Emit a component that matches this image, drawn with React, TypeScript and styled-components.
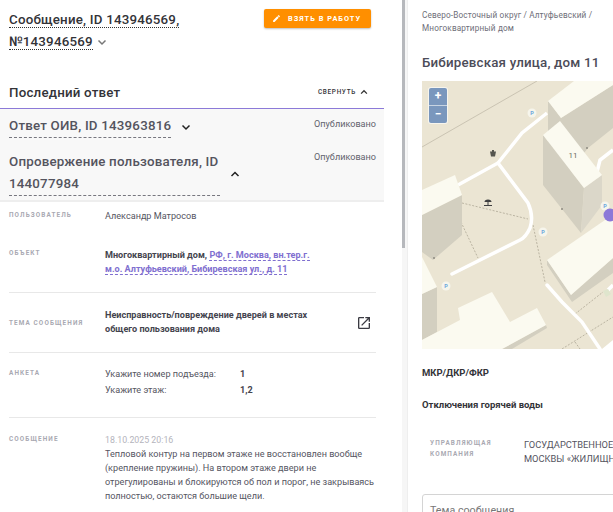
import styled, { createGlobalStyle } from "styled-components";

const GlobalStyle = createGlobalStyle`
  html, body {
    margin: 0;
    height: 100%;
    overflow: hidden;
    background: #fff;
  }
  body {
    font-family: Roboto, "Noto Sans", sans-serif;
    color: #3c3c46;
  }
`;

const Page = styled.div`
  display: flex;
  width: 613px;
  height: 512px;
  overflow: hidden;
`;

const LeftPane = styled.div`
  width: 402px;
  flex: none;
  height: 512px;
  overflow: hidden;
`;

const ScrollTrack = styled.div`
  width: 5px;
  flex: none;
  background: #f6f6f6;
`;

const ScrollThumb = styled.div`
  width: 3px;
  height: 248px;
  background: #b6b8bc;
`;

const Head = styled.div`
  display: flex;
  justify-content: space-between;
  align-items: flex-start;
  padding: 9px 13px 0 9px;
  width: 384px;
  height: 51px;
  box-sizing: border-box;
`;

const MainTitle = styled.div`
  width: 200px;
  font-size: 13.33px;
  line-height: 21.5px;
  letter-spacing: 0.2px;
  font-weight: 500;
  color: #333338;
`;

const DottedText = styled.span`
  border-bottom: 1px dotted #333;
`;

const TitleChevron = styled.span`
  display: inline-block;
  line-height: 0;
  vertical-align: -2px;
`;

const TakeButton = styled.button`
  display: flex;
  align-items: center;
  gap: 7px;
  height: 19px;
  width: 107px;
  padding: 0 0 0 8px;
  box-sizing: border-box;
  border: none;
  border-radius: 2px;
  background: #ff8f00;
  color: #fff;
  font-family: Roboto, sans-serif;
  font-size: 7.4px;
  font-weight: 700;
  letter-spacing: 1px;
  white-space: nowrap;
  box-shadow: 0 1px 2px rgba(0, 0, 0, 0.25);
`;

const SectionHead = styled.div`
  display: flex;
  justify-content: space-between;
  align-items: center;
  width: 384px;
  height: 24px;
  margin-top: 29px;
  padding: 0 15px 0 9px;
  box-sizing: border-box;
`;

const SectionTitle = styled.div`
  font-size: 13.33px;
  letter-spacing: 0.2px;
  font-weight: 500;
  color: #333338;
`;

const Collapse = styled.div`
  display: flex;
  align-items: center;
  gap: 3px;
  font-size: 6.4px;
  font-weight: 500;
  letter-spacing: 0.7px;
  color: #333338;
`;

const Answers = styled.div`
  width: 384px;
  margin-top: 4px;
  height: 94px;
  box-sizing: border-box;
  border-top: 1px solid #8c7ad8;
  border-bottom: 2px solid #eeeeee;
  background: #f8f8f8;
  padding: 6px 8px 0 9px;
`;

const AnswerRow = styled.div<{ $last?: boolean }>`
  display: flex;
  justify-content: space-between;
  align-items: flex-start;
  margin-bottom: ${(p) => (p.$last ? "0" : "13px")};
`;

const AnswerLeft = styled.div`
  display: flex;
  align-items: center;
  gap: 9px;
`;

const AnswerTitle = styled.div<{ $wide?: boolean }>`
  width: ${(p) => (p.$wide ? "211px" : "auto")};
  font-size: 13.33px;
  line-height: 22px;
  font-weight: 500;
  color: #54545e;
  letter-spacing: 0.2px;
  border-bottom: 1px dashed #77777f;
`;

const Status = styled.div<{ $raised?: boolean }>`
  margin-top: ${(p) => (p.$raised ? "-2px" : "1px")};
  font-size: 9.1px;
  line-height: 16px;
  color: #62626c;
`;

const Rows = styled.div`
  width: 367px;
  margin-left: 9px;
`;

const InfoRow = styled.div<{ $height: number; $line?: boolean; $center?: boolean }>`
  display: grid;
  grid-template-columns: 96px 1fr;
  height: ${(p) => p.$height}px;
  box-sizing: border-box;
  align-items: ${(p) => (p.$center ? "center" : "start")};
  border-bottom: ${(p) => (p.$line ? "1px solid #e8e8e8" : "none")};
`;

const RowLabel = styled.div<{ $top?: number }>`
  margin-top: ${(p) => p.$top ?? 0}px;
  font-size: 6.4px;
  font-weight: 700;
  letter-spacing: 1.1px;
  line-height: 10px;
  color: #a9a9b2;
`;

const CompanyLabel = styled(RowLabel)`
  line-height: 11px;
`;

const RowValue = styled.div<{ $top?: number }>`
  margin-top: ${(p) => p.$top ?? 0}px;
  font-size: 9.1px;
  line-height: 14px;
  color: #55555f;
`;

const BoldValue = styled(RowValue)`
  font-weight: 700;
  line-height: 13.5px;
  color: #44444e;
  width: 212px;
`;

const AddressLink = styled.span`
  color: #7f6fd0;
  border-bottom: 1px dashed #7f6fd0;
`;

const Subject = styled.div`
  display: flex;
  justify-content: space-between;
  align-items: center;
  padding-right: 4px;
`;

const Survey = styled.div`
  display: grid;
  grid-template-columns: 135px 1fr;
  row-gap: 2px;
  margin-top: 14px;
`;

const SurveyAnswer = styled.span`
  font-size: 9.1px;
  line-height: 14px;
  font-weight: 700;
  color: #44444e;
`;

const MessageBody = styled.div`
  margin-top: 16px;
`;

const Dated = styled.div`
  font-size: 8.8px;
  line-height: 13px;
  color: #b4b4bc;
`;

const RightPane = styled.div`
  flex: 1;
  min-width: 0;
  padding: 9px 0 0 14px;
  overflow: hidden;
  border-left: 1px solid #eee;
`;

const Crumbs = styled.div`
  font-size: 8.2px;
  line-height: 13px;
  letter-spacing: 0.15px;
  color: #6e6e78;
  width: 190px;
`;

const PlaceTitle = styled.div`
  margin-top: 18px;
  font-size: 13.33px;
  line-height: 20px;
  font-weight: 500;
  letter-spacing: 0.2px;
  color: #4c4c58;
  white-space: nowrap;
`;

const MapBox = styled.div`
  position: relative;
  margin-top: 8px;
  height: 268px;
  width: 191px;
  overflow: hidden;
  background: #ebe5d3;
`;

const MapCanvas = styled.svg`
  display: block;
`;

const ZoomBox = styled.div`
  position: absolute;
  top: 7px;
  left: 7px;
  width: 18px;
  border-radius: 2px;
  box-shadow: 0 0 0 1px rgba(255, 255, 255, 0.6);
  background: #7a97bd;
  color: #fff;
  font-size: 12px;
  font-weight: 700;
  text-align: center;
`;

const ZoomBtn = styled.div`
  height: 17px;
  line-height: 16px;
  & + & {
    border-top: 1px solid #c8d4e2;
  }
`;

const BlockTitle = styled.div<{ $top: number }>`
  margin-top: ${(p) => p.$top}px;
  font-size: 9.5px;
  line-height: 14px;
  font-weight: 700;
  color: #333338;
  white-space: nowrap;
`;

const CompanyRow = styled.div`
  display: grid;
  grid-template-columns: 94px 200px;
  margin-top: 26px;
  padding-left: 8px;
`;

const CompanyValue = styled.div`
  font-size: 9.3px;
  line-height: 14px;
  color: #55555f;
  white-space: nowrap;
`;

const MessageBox = styled.div`
  margin-top: 28px;
  width: 260px;
  height: 60px;
  box-sizing: border-box;
  border: 1px solid #d4d4d4;
  border-radius: 3px;
  padding: 9px 7px;
  font-size: 10.7px;
  line-height: 14px;
  color: #777;
`;

const Chevron = ({ up, color = "#333", size = 12 }: { up?: boolean; color?: string; size?: number }) => (
  <svg width={size} height={size} viewBox="0 0 12 12" fill="none">
    <path d={up ? "M2.5 8 6 4.5 9.5 8" : "M2.5 4.5 6 8l3.5-3.5"} stroke={color} strokeWidth="1.5" />
  </svg>
);

const ROOF = "#fbfaf0";
const WALL = "#d3cfc0";
const WALL_LIGHT = "#dbd7c9";

const parkings = [
  [110, 32],
  [121, 151],
  [24, 205],
  [183, 125],
];

const dots = [
  [165, 67],
  [140, 128],
  [12, 177],
];

const MapArt = () => (
  <MapCanvas width="191" height="268" viewBox="0 0 191 268">
    <path d="M0 66 115 0" fill="none" stroke="#b3ad9c" strokeWidth="0.6" />
    <path
      d="M40 122 106 138M30 122 56 177M111 144 123 201M153 233 181 211M140 268 191 236M153 261 158 268"
      fill="none"
      stroke="#98927f"
      strokeWidth="0.6"
      strokeDasharray="2 1.5"
    />
    <g fill="none" stroke="#fff" strokeWidth="3.5">
      <path d="M36 104 76 82 100 52 125 32" />
      <path d="M76 82 106 122Q112 135 108 147 104 156 98 159L30 193" strokeLinecap="round" />
      <path d="M125 204 140 221 160 241 178 268" strokeLinecap="round" />
      <path d="M191 69 178 79 175 91" />
      <path d="M186 209 191 204" />
    </g>
    <path d="M181 210 186 208 189 213 184 216Z" fill="#dfe5cd" />
    <path d="M180 268 191 259V268Z" fill="#fff" />

    <path d="M126 20 139 37 191 4V47L166 67 140 100 126 60Z" fill={WALL} />
    <path d="M126 20 152 0H191V4L139 37Z" fill={ROOF} />

    <path d="M121 54 162 107 159 152 121 104Z" fill={WALL} />
    <path d="M162 107 180 94V124L159 152Z" fill={WALL_LIGHT} />
    <path d="M121 54 138 40 180 94 162 107Z" fill={ROOF} />

    <path d="M0 134 40 114V154L11 179 0 171Z" fill={WALL} />
    <path d="M0 109 33 94 40 114 0 134Z" fill={ROOF} />

    <path d="M0 213 15 206V251L0 259Z" fill={WALL} />
    <path d="M0 176 15 206 0 213Z" fill={ROOF} />

    <path d="M125 179V184L150 221 191 192V177L149 214Z" fill={WALL} />
    <path d="M125 179 183 139 191 135V177L149 214Z" fill={ROOF} />

    <path d="M124 244 125 247 90 268H80Z" fill={WALL} />
    <path d="M0 259 38 239 36 227 70 211 88 241 115 227 124 244 80 268H0Z" fill={ROOF} />

    <text x="151" y="77" fontSize="8" fontFamily="Roboto, sans-serif" fill="#6b6b62" textAnchor="middle">
      11
    </text>

    {dots.map(([x, y]) => (
      <circle key={x} cx={x} cy={y} r="1" fill="#8c8a80" />
    ))}

    <g fontFamily="Roboto, sans-serif" fontSize="5.500" fontWeight="700" fill="#6aa6dc" textAnchor="middle">
      {parkings.map(([x, y]) => (
        <g key={x}>
          <circle cx={x} cy={y} r="4.500" fill="#f6f5ec" />
          <text x={x} y={y + 2}>
            P
          </text>
        </g>
      ))}
    </g>

    <path d="M68 70.500h6l-1 5h-4ZM70 69h2v1.500h-2Z" fill="#55554f" />
    <path d="M62.500 121a3.500 2.500 0 0 1 7 0ZM65.500 121h1v3h-1ZM62 124h8v1h-8Z" fill="#3f3f40" />
    <circle cx="188" cy="134" r="6.500" fill="#8c78d8" />
  </MapCanvas>
);

export default function App() {
  return (
    <Page>
      <GlobalStyle />
      <LeftPane>
        <Head>
          <MainTitle>
            <DottedText>Сообщение, ID 143946569,</DottedText>{" "}
            <DottedText>№143946569</DottedText>{" "}
            <TitleChevron>
              <Chevron color="#777" />
            </TitleChevron>
          </MainTitle>
          <TakeButton>
            <svg width="9" height="9" viewBox="0 0 24 24" fill="#fff">
              <path d="M3 17.25V21h3.75L17.8 9.94l-3.75-3.75L3 17.25zM20.7 7.04a1 1 0 0 0 0-1.41l-2.34-2.34a1 1 0 0 0-1.41 0l-1.83 1.83 3.75 3.75 1.83-1.83z" />
            </svg>
            ВЗЯТЬ В РАБОТУ
          </TakeButton>
        </Head>
        <SectionHead>
          <SectionTitle>Последний ответ</SectionTitle>
          <Collapse>
            СВЕРНУТЬ <Chevron up size={10} />
          </Collapse>
        </SectionHead>
        <Answers>
          <AnswerRow>
            <AnswerLeft>
              <AnswerTitle>Ответ ОИВ, ID 143963816</AnswerTitle>
              <Chevron color="#222" />
            </AnswerLeft>
            <Status>Опубликовано</Status>
          </AnswerRow>
          <AnswerRow $last>
            <AnswerLeft>
              <AnswerTitle $wide>Опровержение пользователя, ID 144077984</AnswerTitle>
              <Chevron up color="#222" />
            </AnswerLeft>
            <Status $raised>Опубликовано</Status>
          </AnswerRow>
        </Answers>
        <Rows>
          <InfoRow $height={38}>
            <RowLabel $top={8}>ПОЛЬЗОВАТЕЛЬ</RowLabel>
            <RowValue $top={7}>Александр Матросов</RowValue>
          </InfoRow>
          <InfoRow $height={53} $line>
            <RowLabel $top={8}>ОБЪЕКТ</RowLabel>
            <BoldValue $top={9}>
              Многоквартирный дом,{" "}
              <AddressLink>РФ, г. Москва, вн.тер.г. м.о. Алтуфьевский, Бибиревская ул., д. 11</AddressLink>
            </BoldValue>
          </InfoRow>
          <InfoRow $height={60} $line $center>
            <RowLabel>ТЕМА СООБЩЕНИЯ</RowLabel>
            <Subject>
              <BoldValue>Неисправность/повреждение дверей в местах общего пользования дома</BoldValue>
              <svg width="16" height="16" viewBox="0 0 24 24" fill="#3a3a42">
                <path d="M19 19H5V5h7V3H5a2 2 0 0 0-2 2v14a2 2 0 0 0 2 2h14a2 2 0 0 0 2-2v-7h-2v7zM14 3v2h3.590l-9.830 9.830 1.410 1.410L19 6.410V10h2V3h-7z" />
              </svg>
            </Subject>
          </InfoRow>
          <InfoRow $height={65} $line>
            <RowLabel $top={15}>АНКЕТА</RowLabel>
            <Survey>
              <RowValue>Укажите номер подъезда:</RowValue>
              <SurveyAnswer>1</SurveyAnswer>
              <RowValue>Укажите этаж:</RowValue>
              <SurveyAnswer>1,2</SurveyAnswer>
            </Survey>
          </InfoRow>
          <InfoRow $height={100}>
            <RowLabel $top={16}>СООБЩЕНИЕ</RowLabel>
            <MessageBody>
              <Dated>18.10.2025 20:16</Dated>
              <RowValue>
                Тепловой контур на первом этаже не восстановлен вообще (крепление пружины). На втором этаже двери не
                отрегулированы и блокируются об пол и порог, не закрываясь полностью, остаются большие щели.
              </RowValue>
            </MessageBody>
          </InfoRow>
        </Rows>
      </LeftPane>
      <ScrollTrack>
        <ScrollThumb />
      </ScrollTrack>
      <RightPane>
        <Crumbs>Северо-Восточный округ / Алтуфьевский / Многоквартирный дом</Crumbs>
        <PlaceTitle>Бибиревская улица, дом 11</PlaceTitle>
        <MapBox>
          <MapArt />
          <ZoomBox>
            <ZoomBtn>+</ZoomBtn>
            <ZoomBtn>−</ZoomBtn>
          </ZoomBox>
        </MapBox>
        <BlockTitle $top={17}>МКР/ДКР/ФКР</BlockTitle>
        <BlockTitle $top={18}>Отключения горячей воды</BlockTitle>
        <CompanyRow>
          <CompanyLabel>
            УПРАВЛЯЮЩАЯ
            <br />
            КОМПАНИЯ
          </CompanyLabel>
          <CompanyValue>
            ГОСУДАРСТВЕННОЕ
            <br />
            МОСКВЫ «ЖИЛИЩНИК
          </CompanyValue>
        </CompanyRow>
        <MessageBox>Тема сообщения</MessageBox>
      </RightPane>
    </Page>
  );
}
